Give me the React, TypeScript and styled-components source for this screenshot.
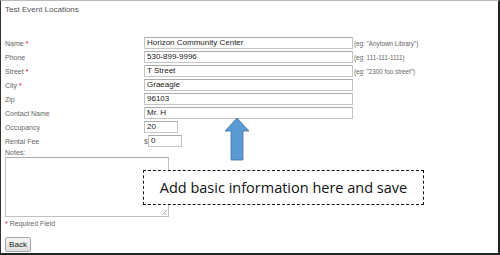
import React from "react";
import styled, { createGlobalStyle } from "styled-components";

const GlobalStyle = createGlobalStyle`
  html, body {
    margin: 0;
    padding: 0;
    background: #fff;
  }
`;

interface Field {
  label: string;
  value: string;
  required?: boolean;
  hint?: string;
  short?: boolean;
  prefix?: string;
}

const fields: Field[] = [
  { label: "Name", value: "Horizon Community Center", required: true, hint: '(eg: "Anytown Library")' },
  { label: "Phone", value: "530-899-9996", hint: "(eg: 111-111-1111)" },
  { label: "Street", value: "T Street", required: true, hint: '(eg: "2300 foo street")' },
  { label: "City", value: "Graeagle", required: true },
  { label: "Zip", value: "96103" },
  { label: "Contact Name", value: "Mr. H" },
  { label: "Occupancy", value: "20", short: true },
  { label: "Rental Fee", value: "0", short: true, prefix: "$" },
];

export default function App() {
  return (
    <>
      <GlobalStyle />
      <Frame>
        <Title>Test Event Locations</Title>
        <Form>
          {fields.map((f) => (
            <Row key={f.label}>
              <Label>
                {f.label}
                {f.required && <Star> *</Star>}
              </Label>
              <Cell>
                {f.prefix && <Prefix>{f.prefix}</Prefix>}
                <Input $short={f.short}>{f.value}</Input>
                {f.hint && <Hint>{f.hint}</Hint>}
              </Cell>
            </Row>
          ))}
        </Form>
        <NotesLabel>Notes:</NotesLabel>
        <TextArea>
          <Grip viewBox="0 0 6 6" width="6" height="6">
            <path d="M1 6 L6 1 M3.5 6 L6 3.5" stroke="#999" strokeWidth="0.8" />
          </Grip>
        </TextArea>
        <Required>
          <Star>*</Star> Required Field
        </Required>
        <BackButton>Back</BackButton>

        <Arrow viewBox="0 0 26 44" width="26" height="44">
          <path
            d="M13 1 L25 14 L19 14 L19 43 L7 43 L7 14 L1 14 Z"
            fill="#5b9bd5"
            stroke="#41719c"
            strokeWidth="0.8"
          />
        </Arrow>
        <Callout>Add basic information here and save</Callout>
      </Frame>
    </>
  );
}

const Frame = styled.div`
  position: relative;
  width: 500px;
  height: 255px;
  box-sizing: border-box;
  border-top: 1px solid #bbb;
  border-left: 1px solid #333;
  border-right: 2px solid #222;
  border-bottom: 2px solid #222;
  padding: 4px 0 0 4px;
  font-family: "Liberation Sans", Arial, sans-serif;
  color: #666;
  overflow: hidden;
`;

const Title = styled.div`
  font-size: 8px;
  line-height: 10px;
  color: #555;
  height: 32px;
`;

const Form = styled.div`
  display: flex;
  flex-direction: column;
  gap: 2px;
`;

const Row = styled.div`
  display: grid;
  grid-template-columns: 139px 1fr;
  align-items: center;
  height: 12px;
`;

const Label = styled.div`
  font-size: 7px;
  color: #666;
`;

const Star = styled.span`
  color: #d9001b;
`;

const Cell = styled.div`
  display: flex;
  align-items: center;
`;

const Prefix = styled.span`
  font-size: 7px;
  color: #666;
  width: 4px;
`;

const Input = styled.div<{ $short?: boolean }>`
  box-sizing: border-box;
  width: ${({ $short }) => ($short ? "34px" : "209px")};
  height: 12px;
  border: 1px solid #c4c4c4;
  border-top-color: #ababab;
  padding: 0 2px;
  font-size: 8px;
  line-height: 10px;
  color: #222;
  background: #fff;
`;

const Hint = styled.span`
  font-size: 6.3px;
  color: #666;
  margin-left: 1px;
`;

const NotesLabel = styled.div`
  font-size: 7px;
  margin-top: 1px;
  line-height: 9px;
`;

const TextArea = styled.div`
  position: relative;
  box-sizing: border-box;
  width: 164px;
  height: 60px;
  border: 1px solid #c0c0c0;
  border-top-color: #ababab;
  background: #fff;
`;

const Grip = styled.svg`
  position: absolute;
  right: 1px;
  bottom: 1px;
`;

const Required = styled.div`
  font-size: 7px;
  margin-top: 2px;
  line-height: 9px;
`;

const BackButton = styled.button`
  display: block;
  margin-top: 9px;
  box-sizing: border-box;
  width: 26px;
  height: 15px;
  padding: 0;
  font-family: "Liberation Sans", Arial, sans-serif;
  font-size: 8px;
  color: #222;
  background: linear-gradient(#f6f6f6, #dedede);
  border: 1px solid #a6a6a6;
  border-radius: 2px;
`;

const Arrow = styled.svg`
  position: absolute;
  left: 223px;
  top: 116px;
`;

const Callout = styled.div`
  position: absolute;
  left: 142px;
  top: 169px;
  box-sizing: border-box;
  width: 281px;
  height: 35px;
  border: 1px dashed #111;
  display: flex;
  align-items: center;
  justify-content: center;
  font-family: "Open Sans", "Noto Sans", sans-serif;
  font-size: 14.5px;
  color: #111;
  background: #fff;
`;
